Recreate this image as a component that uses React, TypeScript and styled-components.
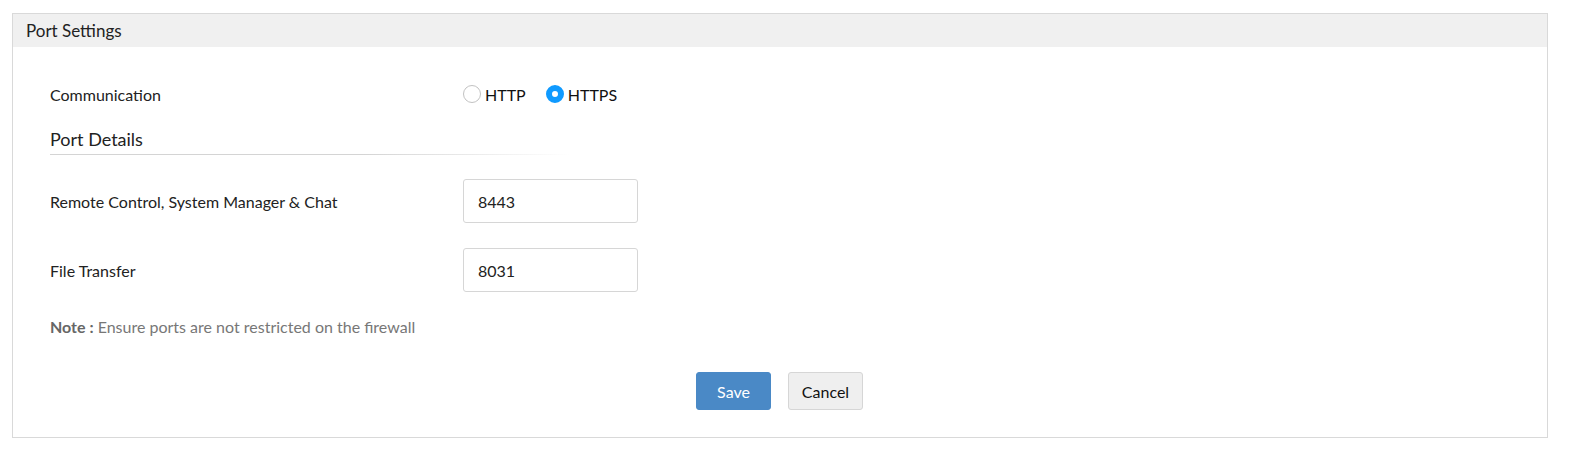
import React, { useState } from 'react';
import styled, { createGlobalStyle } from 'styled-components';

const GlobalStyle = createGlobalStyle`
  html, body {
    margin: 0;
    padding: 0;
    background: #fff;
    font-family: Lato, "Open Sans", sans-serif;
    color: #222;
  }
`;

const Page = styled.div`
  padding: 13px 22px 0 12px;
`;

const Panel = styled.section`
  border: 1px solid #d9d9d9;
  background: #fff;
`;

const PanelHeader = styled.div`
  height: 33px;
  display: flex;
  align-items: center;
  padding-left: 13px;
  background: #f0f0f0;
  font-size: 17px;
  color: #222;
`;

const PanelBody = styled.div`
  padding: 32px 38px 27px 37px;
  display: flex;
  flex-direction: column;
`;

const Row = styled.div<{ $height: number; $gap?: number }>`
  display: grid;
  grid-template-columns: 413px 1fr;
  align-items: center;
  height: ${(p) => p.$height}px;
  margin-top: ${(p) => p.$gap ?? 0}px;
`;

const Label = styled.label`
  font-size: 16px;
  color: #222;
`;

const RadioGroup = styled.div`
  display: flex;
  align-items: center;
  gap: 20px;
`;

const RadioOption = styled.label`
  display: flex;
  align-items: center;
  gap: 4px;
  font-size: 16px;
  color: #111;
  cursor: pointer;
`;

const RadioCircle = styled.span<{ $checked: boolean }>`
  box-sizing: border-box;
  width: 18px;
  height: 18px;
  border-radius: 50%;
  border: ${(p) => (p.$checked ? '6px solid #0f9aff' : '1px solid #c2c2c2')};
  background: #fff;
`;

const SectionTitle = styled.div`
  margin-top: 20px;
  width: 520px;
  padding-bottom: 4px;
  font-size: 18px;
  line-height: 21px;
  color: #222;
  border-bottom: 1px solid;
  border-image: linear-gradient(to right, #d4d4d4, #d4d4d4 60%, rgba(212, 212, 212, 0)) 1;
`;

const PortInput = styled.input`
  box-sizing: border-box;
  width: 175px;
  height: 44px;
  border: 1px solid #d6d6d6;
  border-radius: 3px;
  padding: 0 14px;
  font-family: Lato, "Open Sans", sans-serif;
  font-size: 16px;
  color: #222;
  outline: none;
`;

const Note = styled.div`
  margin-top: 25px;
  height: 20px;
  line-height: 20px;
  font-size: 16px;
  color: #777;

  b {
    color: #666;
    font-weight: 700;
  }
`;

const Actions = styled.div`
  margin-top: 35px;
  display: flex;
  justify-content: center;
  gap: 17px;
`;

const Button = styled.button<{ $primary?: boolean }>`
  box-sizing: border-box;
  height: 38px;
  width: 75px;
  border-radius: 3px;
  font-family: Lato, "Open Sans", sans-serif;
  font-size: 16px;
  cursor: pointer;
  border: 1px solid ${(p) => (p.$primary ? '#4a89c6' : '#d6d6d6')};
  background: ${(p) => (p.$primary ? '#4a89c6' : '#efefef')};
  color: ${(p) => (p.$primary ? '#fff' : '#111')};
`;

const App: React.FC = () => {
  const [protocol, setProtocol] = useState<'http' | 'https'>('https');

  return (
    <>
      <GlobalStyle />
      <Page>
        <Panel>
          <PanelHeader>Port Settings</PanelHeader>
          <PanelBody>
            <Row $height={30}>
              <Label>Communication</Label>
              <RadioGroup>
                <RadioOption onClick={() => setProtocol('http')}>
                  <RadioCircle $checked={protocol === 'http'} />
                  HTTP
                </RadioOption>
                <RadioOption onClick={() => setProtocol('https')}>
                  <RadioCircle $checked={protocol === 'https'} />
                  HTTPS
                </RadioOption>
              </RadioGroup>
            </Row>

            <SectionTitle>Port Details</SectionTitle>

            <Row $height={44} $gap={24}>
              <Label>Remote Control, System Manager &amp; Chat</Label>
              <PortInput defaultValue="8443" />
            </Row>

            <Row $height={44} $gap={25}>
              <Label>File Transfer</Label>
              <PortInput defaultValue="8031" />
            </Row>

            <Note>
              <b>Note :</b> Ensure ports are not restricted on the firewall
            </Note>

            <Actions>
              <Button $primary>Save</Button>
              <Button>Cancel</Button>
            </Actions>
          </PanelBody>
        </Panel>
      </Page>
    </>
  );
};

export default App;
